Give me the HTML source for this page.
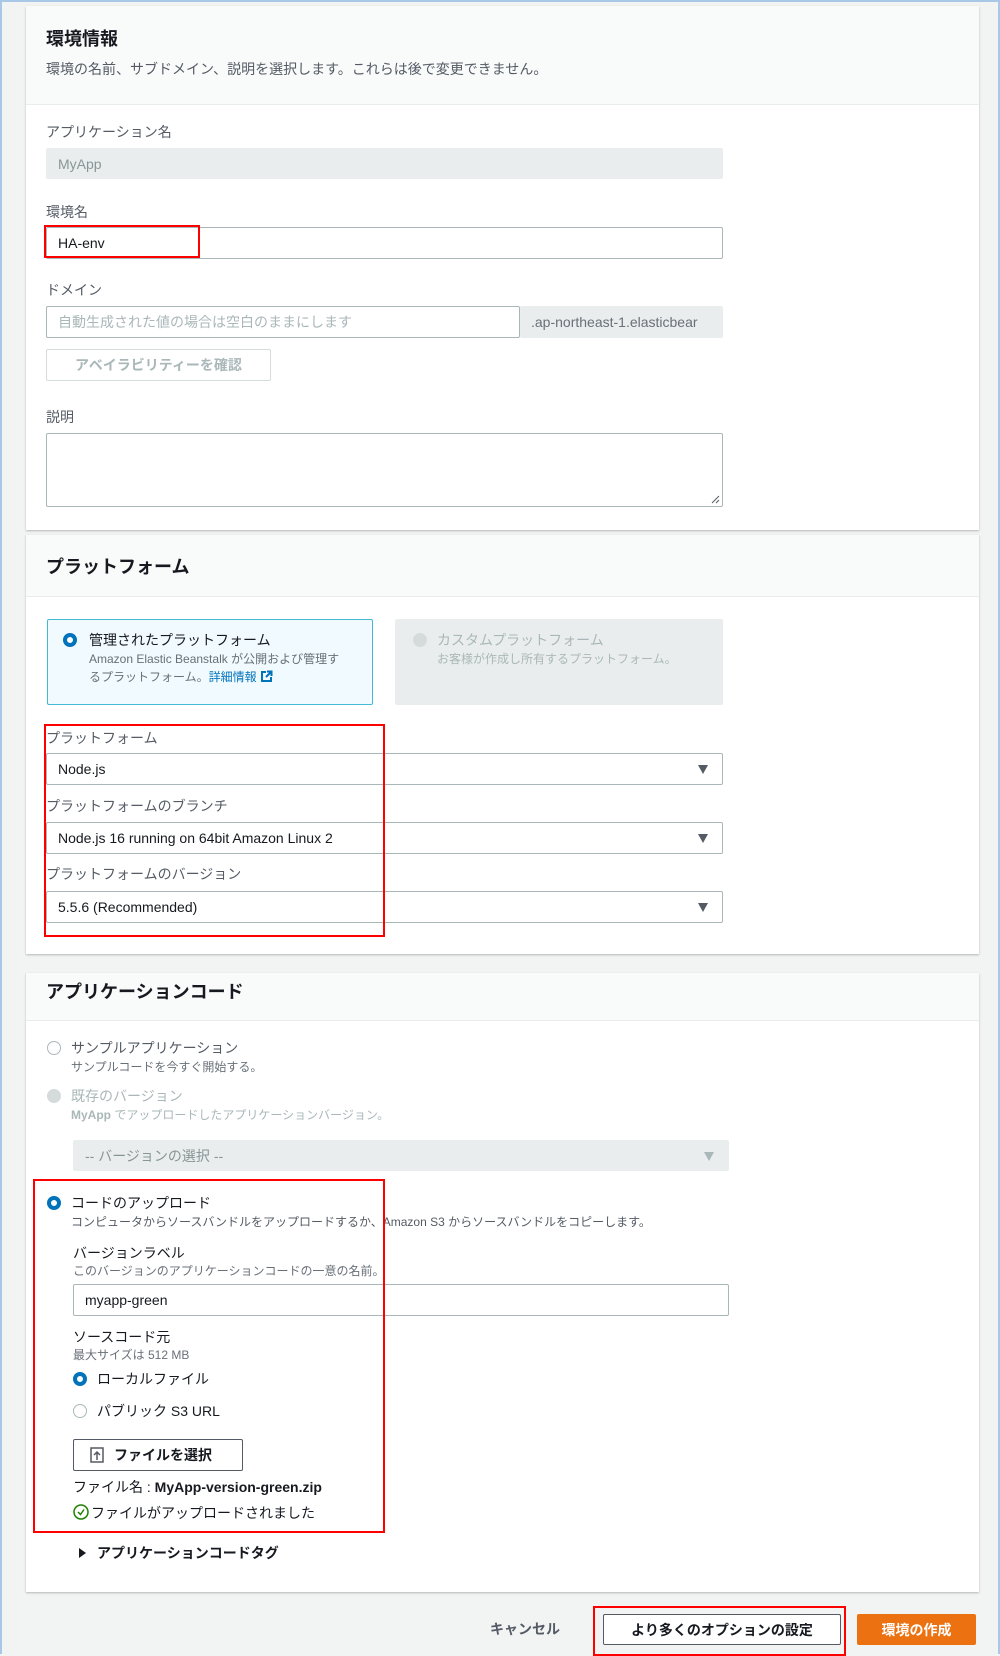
<!DOCTYPE html>
<html><head><meta charset="utf-8">
<style>
*{box-sizing:border-box;margin:0;padding:0}
body{width:1000px;height:1654px;background:#f2f3f3;font-family:"Liberation Sans","Noto Sans CJK JP",sans-serif;color:#16191f;position:relative;overflow:hidden;font-size:14px}
.frame{position:absolute;left:0;top:0;width:1000px;height:1654px;border:2px solid #a9c8e8;border-bottom:none}
.a{position:absolute;white-space:nowrap}
.card{position:absolute;left:26px;width:953px;background:#fff;box-shadow:0 1px 2px rgba(0,0,0,.25)}
.hdr{position:absolute;left:0;top:0;width:100%;background:#f9fafa;border-bottom:1px solid #eaeded}
.h{font-size:18px;font-weight:bold}
.inp{position:absolute;border:1px solid #aab7b8;background:#fff;border-radius:2px;padding-left:11px;display:flex;align-items:center;font-size:14px}
.dis{background:#eaeded;border-color:#eaeded;color:#879596}
.arr{position:absolute;right:14px;top:50%;margin-top:-4px;width:0;height:0;border-left:5px solid transparent;border-right:5px solid transparent;border-top:9px solid #545b64}
.lab{font-size:14px;color:#16191f}
.sub{font-size:12px;color:#687078}
.red{position:absolute;border:2px solid #ff0000}
.rad{position:absolute;width:14px;height:14px;border-radius:50%}
.on{border:4px solid #0073bb;background:#fff}
.off{border:1px solid #aab7b8;background:#fff}
.dr{background:#d5dbdb;border:1px solid #d5dbdb}
.btn{position:absolute;border:1px solid #545b64;background:#fff;border-radius:2px;display:flex;align-items:center;justify-content:center;font-weight:bold;font-size:14px}
</style></head><body>
<div class="frame"></div>

<!-- card 1 -->
<div class="card" style="top:6px;height:524px">
  <div class="hdr" style="height:99px"></div>
</div>
<div class="a h" style="left:46px;top:25px">環境情報</div>
<div class="a" style="left:46px;top:59px;font-size:14px;color:#545b64">環境の名前、サブドメイン、説明を選択します。これらは後で変更できません。</div>
<div class="a lab" style="left:46px;top:122px;color:#545b64">アプリケーション名</div>
<div class="inp dis" style="left:46px;top:148px;width:677px;height:31px">MyApp</div>
<div class="a lab" style="left:46px;top:202px;color:#545b64">環境名</div>
<div class="inp" style="left:46px;top:227px;width:677px;height:32px">HA-env</div>
<div class="red" style="left:44px;top:225px;width:156px;height:33px"></div>
<div class="a lab" style="left:46px;top:280px;color:#545b64">ドメイン</div>
<div class="inp" style="left:46px;top:306px;width:474px;height:32px;color:#aab7b8">自動生成された値の場合は空白のままにします</div>
<div class="inp dis" style="left:520px;top:306px;width:203px;height:32px;color:#687078;overflow:hidden;padding-left:10px">.ap-northeast-1.elasticbear</div>
<div class="btn" style="left:46px;top:349px;width:225px;height:32px;border-color:#d5dbdb;color:#aab7b8">アベイラビリティーを確認</div>
<div class="a lab" style="left:46px;top:407px;color:#545b64">説明</div>
<div class="inp" style="left:46px;top:433px;width:677px;height:74px"></div>
<svg class="a" style="left:710px;top:494px" width="10" height="10"><path d="M2 9L9 2M6 9L9 6" stroke="#545b64" stroke-width="1"/></svg>

<!-- card 2 -->
<div class="card" style="top:535px;height:419px">
  <div class="hdr" style="height:62px"></div>
</div>
<div class="a h" style="left:46px;top:553px">プラットフォーム</div>
<div class="a" style="left:47px;top:619px;width:326px;height:86px;background:#f1faff;border:1px solid #44b9d6;border-radius:2px"></div>
<div class="rad on" style="left:63px;top:633px"></div>
<div class="a" style="left:89px;top:630px;font-size:14px">管理されたプラットフォーム</div>
<div class="a sub" style="left:89px;top:650px;line-height:18px">Amazon Elastic Beanstalk が公開および管理す<br>るプラットフォーム。<span style="color:#0073bb">詳細情報</span> <svg width="13" height="13" style="vertical-align:-2px"><path d="M6 2H2V11H11V7" stroke="#0073bb" stroke-width="2" fill="none"/><path d="M6 7L11 2M7 1.5H11.5V6" stroke="#0073bb" stroke-width="2" fill="none"/></svg></div>
<div class="a" style="left:395px;top:619px;width:328px;height:86px;background:#eaeded;border-radius:2px"></div>
<div class="rad dr" style="left:413px;top:633px"></div>
<div class="a" style="left:437px;top:630px;font-size:14px;color:#aab7b8">カスタムプラットフォーム</div>
<div class="a sub" style="left:437px;top:650px;color:#aab7b8">お客様が作成し所有するプラットフォーム。</div>

<div class="a lab" style="left:46px;top:728px;color:#545b64">プラットフォーム</div>
<div class="inp" style="left:46px;top:753px;width:677px;height:32px">Node.js<div class="arr"></div></div>
<div class="a lab" style="left:46px;top:796px;color:#545b64">プラットフォームのブランチ</div>
<div class="inp" style="left:46px;top:822px;width:677px;height:32px">Node.js 16 running on 64bit Amazon Linux 2<div class="arr"></div></div>
<div class="a lab" style="left:46px;top:864px;color:#545b64">プラットフォームのバージョン</div>
<div class="inp" style="left:46px;top:891px;width:677px;height:32px">5.5.6 (Recommended)<div class="arr"></div></div>
<div class="red" style="left:44px;top:724px;width:341px;height:213px"></div>

<!-- card 3 -->
<div class="card" style="top:973px;height:619px">
  <div class="hdr" style="height:48px"></div>
</div>
<div class="a h" style="left:46px;top:978px">アプリケーションコード</div>
<div class="rad off" style="left:47px;top:1041px"></div>
<div class="a" style="left:71px;top:1038px;color:#545b64">サンプルアプリケーション</div>
<div class="a sub" style="left:71px;top:1058px">サンプルコードを今すぐ開始する。</div>
<div class="rad dr" style="left:47px;top:1089px"></div>
<div class="a" style="left:71px;top:1086px;color:#aab7b8">既存のバージョン</div>
<div class="a sub" style="left:71px;top:1106px;color:#aab7b8"><b>MyApp</b> でアップロードしたアプリケーションバージョン。</div>
<div class="inp dis" style="left:73px;top:1140px;width:656px;height:31px">-- バージョンの選択 --<div class="arr" style="border-top-color:#aab7b8"></div></div>

<div class="rad on" style="left:47px;top:1196px"></div>
<div class="a" style="left:71px;top:1193px">コードのアップロード</div>
<div class="a sub" style="left:71px;top:1213px;color:#545b64">コンピュータからソースバンドルをアップロードするか、Amazon S3 からソースバンドルをコピーします。</div>
<div class="a lab" style="left:73px;top:1243px">バージョンラベル</div>
<div class="a sub" style="left:73px;top:1262px">このバージョンのアプリケーションコードの一意の名前。</div>
<div class="inp" style="left:73px;top:1284px;width:656px;height:32px">myapp-green</div>
<div class="a lab" style="left:73px;top:1327px">ソースコード元</div>
<div class="a sub" style="left:73px;top:1346px">最大サイズは 512 MB</div>
<div class="rad on" style="left:73px;top:1372px"></div>
<div class="a" style="left:97px;top:1369px">ローカルファイル</div>
<div class="rad off" style="left:73px;top:1404px"></div>
<div class="a" style="left:97px;top:1401px">パブリック S3 URL</div>
<div class="btn" style="left:73px;top:1439px;width:170px;height:32px;justify-content:flex-start;padding-left:16px"><svg width="14" height="16" style="margin-right:10px"><rect x="1" y="1" width="12" height="14" fill="none" stroke="#545b64" stroke-width="1.5"/><path d="M7 13V5M4 8L7 5L10 8" stroke="#545b64" stroke-width="1.5" fill="none"/></svg>ファイルを選択</div>
<div class="a" style="left:73px;top:1477px">ファイル名 : <b>MyApp-version-green.zip</b></div>
<svg class="a" style="left:73px;top:1504px" width="16" height="16"><circle cx="8" cy="8" r="7" fill="none" stroke="#1d8102" stroke-width="1.5"/><path d="M5 8L7.5 10.5L11 5.5" stroke="#1d8102" stroke-width="1.5" fill="none"/></svg>
<div class="a" style="left:91px;top:1503px">ファイルがアップロードされました</div>
<div class="red" style="left:33px;top:1179px;width:352px;height:354px"></div>
<div class="a" style="left:79px;top:1548px;width:0;height:0;border-top:5px solid transparent;border-bottom:5px solid transparent;border-left:7px solid #16191f"></div>
<div class="a" style="left:97px;top:1543px;font-weight:bold">アプリケーションコードタグ</div>

<!-- footer -->
<div class="a" style="left:490px;top:1619px;font-weight:bold;color:#545b64">キャンセル</div>
<div class="btn" style="left:603px;top:1614px;width:238px;height:31px">より多くのオプションの設定</div>
<div class="red" style="left:593px;top:1606px;width:253px;height:50px"></div>
<div class="btn" style="left:857px;top:1614px;width:119px;height:31px;background:#ec7211;border-color:#ec7211;color:#fff">環境の作成</div>
</body></html>
